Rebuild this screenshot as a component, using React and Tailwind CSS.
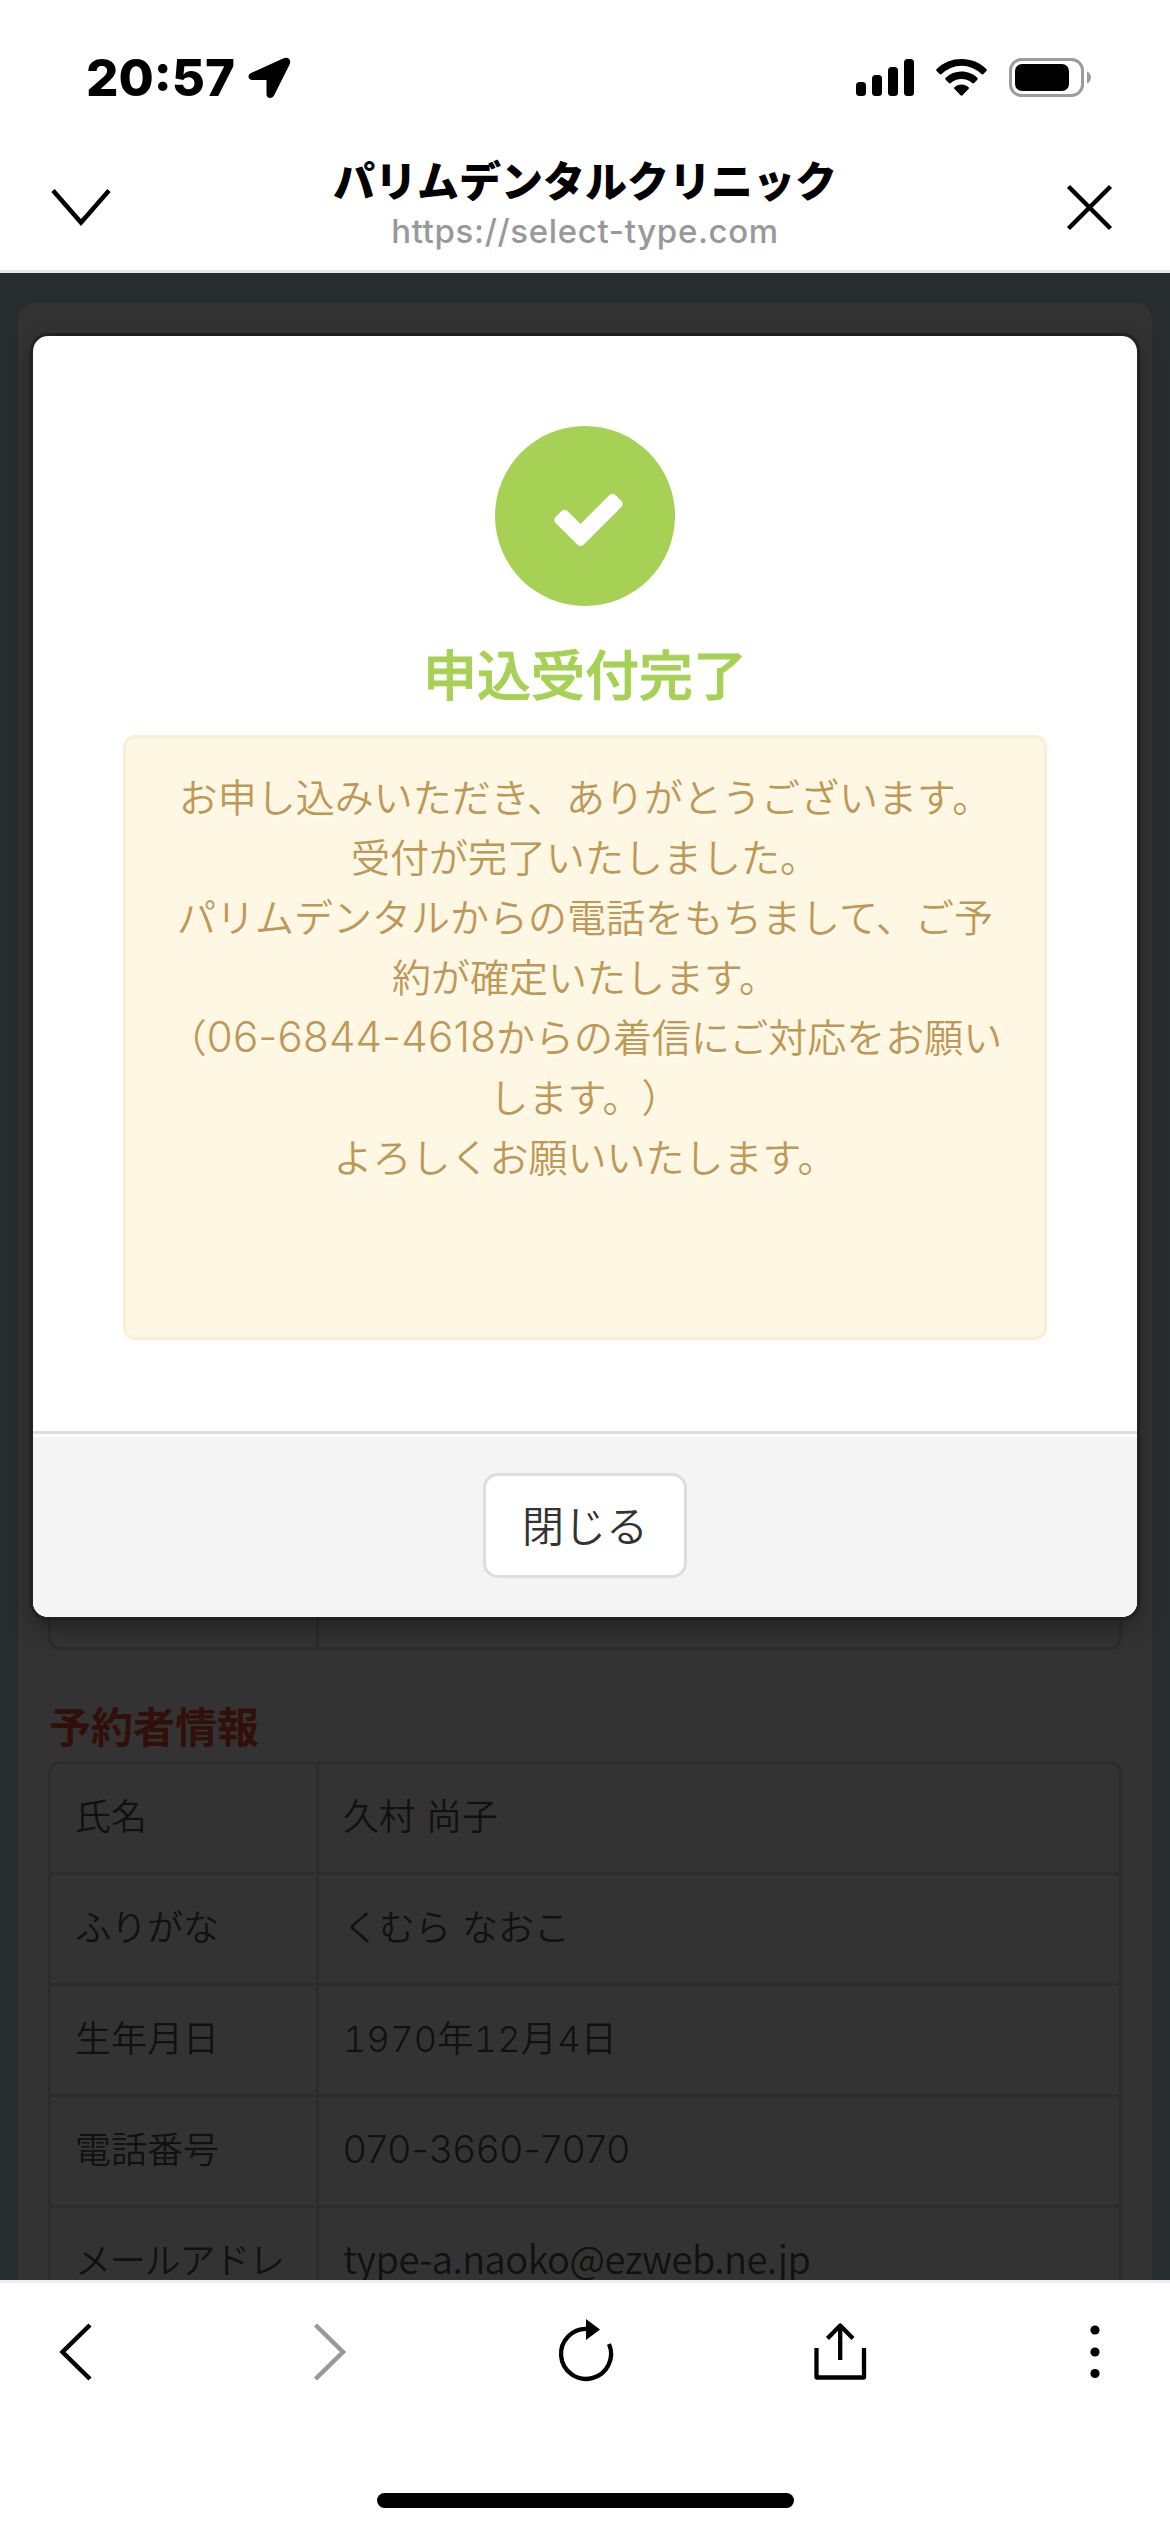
import { useState } from "react";

const guestInfo = [
  { label: "氏名", value: "久村 尚子" },
  { label: "ふりがな", value: "くむら なおこ" },
  {
    label: "生年月日",
    value: "1970年12月4日",
    valueClass:
      "font-[Inter,'Noto_Sans_CJK_JP',sans-serif] text-[36px] tracking-[0.300px] tabular-nums",
  },
  {
    label: "電話番号",
    value: "070-3660-7070",
    valueClass:
      "font-[Inter,'Noto_Sans_CJK_JP',sans-serif] text-[38px] tracking-[0.600px]",
  },
  {
    label: "メールアドレス",
    labelClass: "tracking-[-1.200px]",
    value: "type-a.naoko@ezweb.ne.jp",
    valueClass: "text-[38px] tracking-[-0.500px]",
  },
];

function StatusBar() {
  return (
    <div className="flex h-[156px] items-start justify-between pt-[56px] pr-[78px] pl-[86px]">
      <div className="flex items-center gap-[13px]">
        <span className="w-[148px] font-[Inter,sans-serif] text-[51px] leading-[44px] font-extrabold whitespace-nowrap">
          20:57
        </span>
        <svg width="44" height="44" viewBox="247 57 44 44">
          <path d="M252.500 81H266.500V95.500c0 4.200 6 4.700 7.800.6L289.600 65.500c2-4.600-1.300-8.300-6-6.200L251 74c-4 2-3 7 1.500 7z" />
        </svg>
      </div>

      <div className="flex items-center">
        <svg width="60" height="44" viewBox="855 56 60 44">
          <rect x="856" y="82" width="10" height="14" rx="3.500" />
          <rect x="872" y="75" width="10" height="21" rx="3.500" />
          <rect x="888" y="67" width="10" height="29" rx="3.500" />
          <rect x="904" y="59" width="10" height="37" rx="3.500" />
        </svg>
        <svg
          className="ml-[20px]"
          width="53"
          height="44"
          viewBox="935 56 53 44"
        >
          <path d="M961.500 59c9.700 0 18.500 3.700 24.800 9.900.7.700.7 1.500.1 2.100l-3 3c-.6.600-1.400.6-2 .1a28 28 0 0 0-39.800 0c-.6.500-1.400.5-2-.1l-3-3c-.6-.6-.6-1.400.1-2.100A35.500 35.500 0 0 1 961.500 59z" />
          <path d="M961.500 71.500c6.200 0 11.700 2.300 15.800 6.200.6.600.6 1.500 0 2.100l-3.200 3.200c-.6.600-1.300.6-1.900.1a15.800 15.800 0 0 0-21.400 0c-.6.500-1.300.5-1.900-.1l-3.200-3.200c-.6-.6-.6-1.500 0-2.100a22.800 22.800 0 0 1 15.800-6.200z" />
          <path d="M961.500 84.500c2.700 0 5.100 1 6.900 2.400.7.600.7 1.400.1 2l-6 6.300c-.6.600-1.400.6-2 0l-6-6.300c-.6-.6-.6-1.400.1-2 1.800-1.400 4.200-2.400 6.900-2.400z" />
        </svg>
        <svg
          className="ml-[20px]"
          width="84"
          height="44"
          viewBox="1008 56 84 44"
        >
          <rect
            x="1010.500"
            y="59.500"
            width="72"
            height="36"
            rx="11"
            fill="none"
            stroke="#9b9b9b"
            strokeWidth="3"
          />
          <rect x="1015" y="64" width="54" height="27" rx="7" />
          <path d="M1087 71.500c5.300 2 5.300 10 0 12z" fill="#9b9b9b" />
        </svg>
      </div>
    </div>
  );
}

function BrowserHeader() {
  return (
    <header className="h-[273px] shrink-0 border-b-[3px] border-[#e5e6ea] bg-white">
      <StatusBar />
      <div className="flex h-[102px] items-center justify-between px-[48px]">
        <svg width="66" height="66" viewBox="48 174 66 66">
          <path
            d="M53 190.500L81 222.500L109 190.500"
            fill="none"
            stroke="#000"
            strokeWidth="4.500"
          />
        </svg>
        <div className="flex flex-col items-center pb-[1px]">
          <h1 className="text-[42px] leading-[48px] font-black">
            パリムデンタルクリニック
          </h1>
          <p className="pt-[2px] font-[Inter,sans-serif] text-[33px] leading-[53px] font-medium tracking-[0.650px] text-[#999]">
            https://select-type.com
          </p>
        </div>
        <svg width="66" height="50" viewBox="1056 182 66 50">
          <path
            d="M1068.500 186.500L1110.500 228.500M1110.500 186.500L1068.500 228.500"
            stroke="#000"
            strokeWidth="4.500"
          />
        </svg>
      </div>
    </header>
  );
}

function ReservationPage() {
  return (
    <div className="h-full bg-[#c3e1e1] px-[18px] pt-[30px]">
      <div className="h-full rounded-t-[18px] bg-white px-[30px] pt-[30px]">
        {/* Reservation details, mostly covered by the modal */}
        <div className="grid h-[1317px] grid-cols-[265px_1fr] rounded-[12px] border-[3px] border-[#ddd]">
          <div />
          <div className="border-l-[3px] border-[#ddd]" />
        </div>

        <h2 className="mt-[45px] pl-[1px] text-[42px] leading-[60px] font-bold text-[#f5502f]">
          予約者情報
        </h2>
        <div className="mt-[6px] rounded-t-[12px] border-[3px] border-[#ddd] text-[36px] leading-[60px] font-[350] text-[#555]">
          {guestInfo.map((item) => (
            <div
              key={item.label}
              className="grid min-h-[111px] grid-cols-[265px_1fr] border-b-[3px] border-[#ddd]"
            >
              <div className="px-[24px] pt-[20px] break-all">
                <span className={item.labelClass}>{item.label}</span>
              </div>
              <div className="border-l-[3px] border-[#ddd] pt-[20px] pl-[24px] [word-spacing:3px]">
                <span className={item.valueClass}>{item.value}</span>
              </div>
            </div>
          ))}
        </div>
      </div>
    </div>
  );
}

function CompleteModal({ onClose }) {
  return (
    <div className="absolute inset-0 bg-black/80 px-[30px] pt-[60px]">
      <div className="h-[1287px] rounded-[18px] border-[3px] border-black/30 bg-white bg-clip-padding shadow-[0_9px_21px_rgba(0,0,0,0.300)]">
        {/* Body */}
        <div className="flex h-[1095px] flex-col items-center px-[90px] pt-[90px]">
          <div className="flex size-[180px] shrink-0 items-center justify-center rounded-full bg-[#a7d155] pt-[4px] pl-[6px]">
            <svg width="79" height="79" viewBox="0 0 1792 1792" fill="#fff">
              <path d="M1671 566q0 40-28 68l-724 724-136 136q-28 28-68 28t-68-28l-136-136-362-362q-28-28-28-68t28-68l136-136q28-28 68-28t68 28l294 295 656-657q28-28 68-28t68 28l136 136q28 28 28 68z" />
            </svg>
          </div>
          <h2 className="mt-[27px] text-[54px] leading-[80px] font-medium text-[#a7d155] [-webkit-text-stroke:0.900px_#a7d155]">
            申込受付完了
          </h2>
          <div className="mt-[22px] h-[605px] w-[924px] rounded-[12px] border-[3px] border-[#fbeed5] bg-[#fdf7e3] pt-[27px] text-center text-[39px] leading-[60px] font-[350] whitespace-nowrap text-[#c09853] [text-shadow:0_3px_0_rgba(255,255,255,0.500)] [text-spacing-trim:space-all]">
            <p>お申し込みいただき、ありがとうございます。</p>
            <p>受付が完了いたしました。</p>
            <p>パリムデンタルからの電話をもちまして、ご予</p>
            <p>約が確定いたします。</p>
            <p>
              （
              <span className="font-[Inter,sans-serif] text-[42px] leading-none tracking-[0.200px]">
                06-6844-4618
              </span>
              からの着信にご対応をお願い
            </p>
            <p>します。）</p>
            <p>よろしくお願いいたします。</p>
          </div>
        </div>

        {/* Footer */}
        <div className="h-[186px] rounded-b-[15px] border-t-[3px] border-[#ddd] bg-white pt-[3px]">
          <div className="flex h-[180px] justify-center rounded-b-[15px] bg-[#f4f4f4] pt-[36px]">
            <button
              onClick={onClose}
              className="h-[105px] w-[204px] rounded-[15px] border-[3px] border-[#ddd] bg-white pb-[4px] text-[42px] font-[350] text-[#333]"
            >
              閉じる
            </button>
          </div>
        </div>
      </div>
    </div>
  );
}

function BrowserToolbar() {
  return (
    <footer className="flex h-[252px] shrink-0 flex-col items-center justify-between border-t-[3px] border-[#efefef] bg-white pb-[24px]">
      <div className="flex w-full items-center justify-between pt-[34px] pr-[45px] pl-[46px]">
        <svg width="60" height="70" viewBox="46 2317 60 70">
          <path
            d="M90 2325L62.500 2352L90 2379"
            fill="none"
            stroke="#000"
            strokeWidth="4.500"
          />
        </svg>
        <svg width="60" height="70" viewBox="301 2317 60 70">
          <path
            d="M315.500 2325L343 2352L315.500 2379"
            fill="none"
            stroke="#999"
            strokeWidth="4.500"
          />
        </svg>
        <svg width="60" height="70" viewBox="555 2317 60 70">
          <path
            d="M608 2344A25 25 0 1 1 587 2329"
            fill="none"
            stroke="#000"
            strokeWidth="4.300"
          />
          <path d="M585 2319L599 2329.500L585 2340z" />
        </svg>
        <svg width="60" height="70" viewBox="810 2317 60 70">
          <path
            d="M816.500 2348V2377.500H864V2348M840.200 2360V2326M827.500 2338.500L840.200 2325.500L853 2338.500"
            fill="none"
            stroke="#000"
            strokeWidth="4.300"
            strokeLinejoin="round"
          />
        </svg>
        <svg width="60" height="70" viewBox="1065 2317 60 70">
          <circle cx="1095" cy="2330" r="4.600" />
          <circle cx="1095" cy="2352" r="4.600" />
          <circle cx="1095" cy="2373.500" r="4.600" />
        </svg>
      </div>
      <div className="h-[15px] w-[417px] rounded-full bg-black" />
    </footer>
  );
}

export default function App() {
  const [open, setOpen] = useState(true);

  return (
    <div
      lang="ja"
      className="flex h-[2532px] w-[1170px] flex-col overflow-hidden bg-white font-['Noto_Sans_CJK_JP',sans-serif] text-black"
    >
      <BrowserHeader />
      <main className="relative h-[2007px] shrink-0 overflow-hidden">
        <ReservationPage />
        {open && <CompleteModal onClose={() => setOpen(false)} />}
      </main>
      <BrowserToolbar />
    </div>
  );
}
